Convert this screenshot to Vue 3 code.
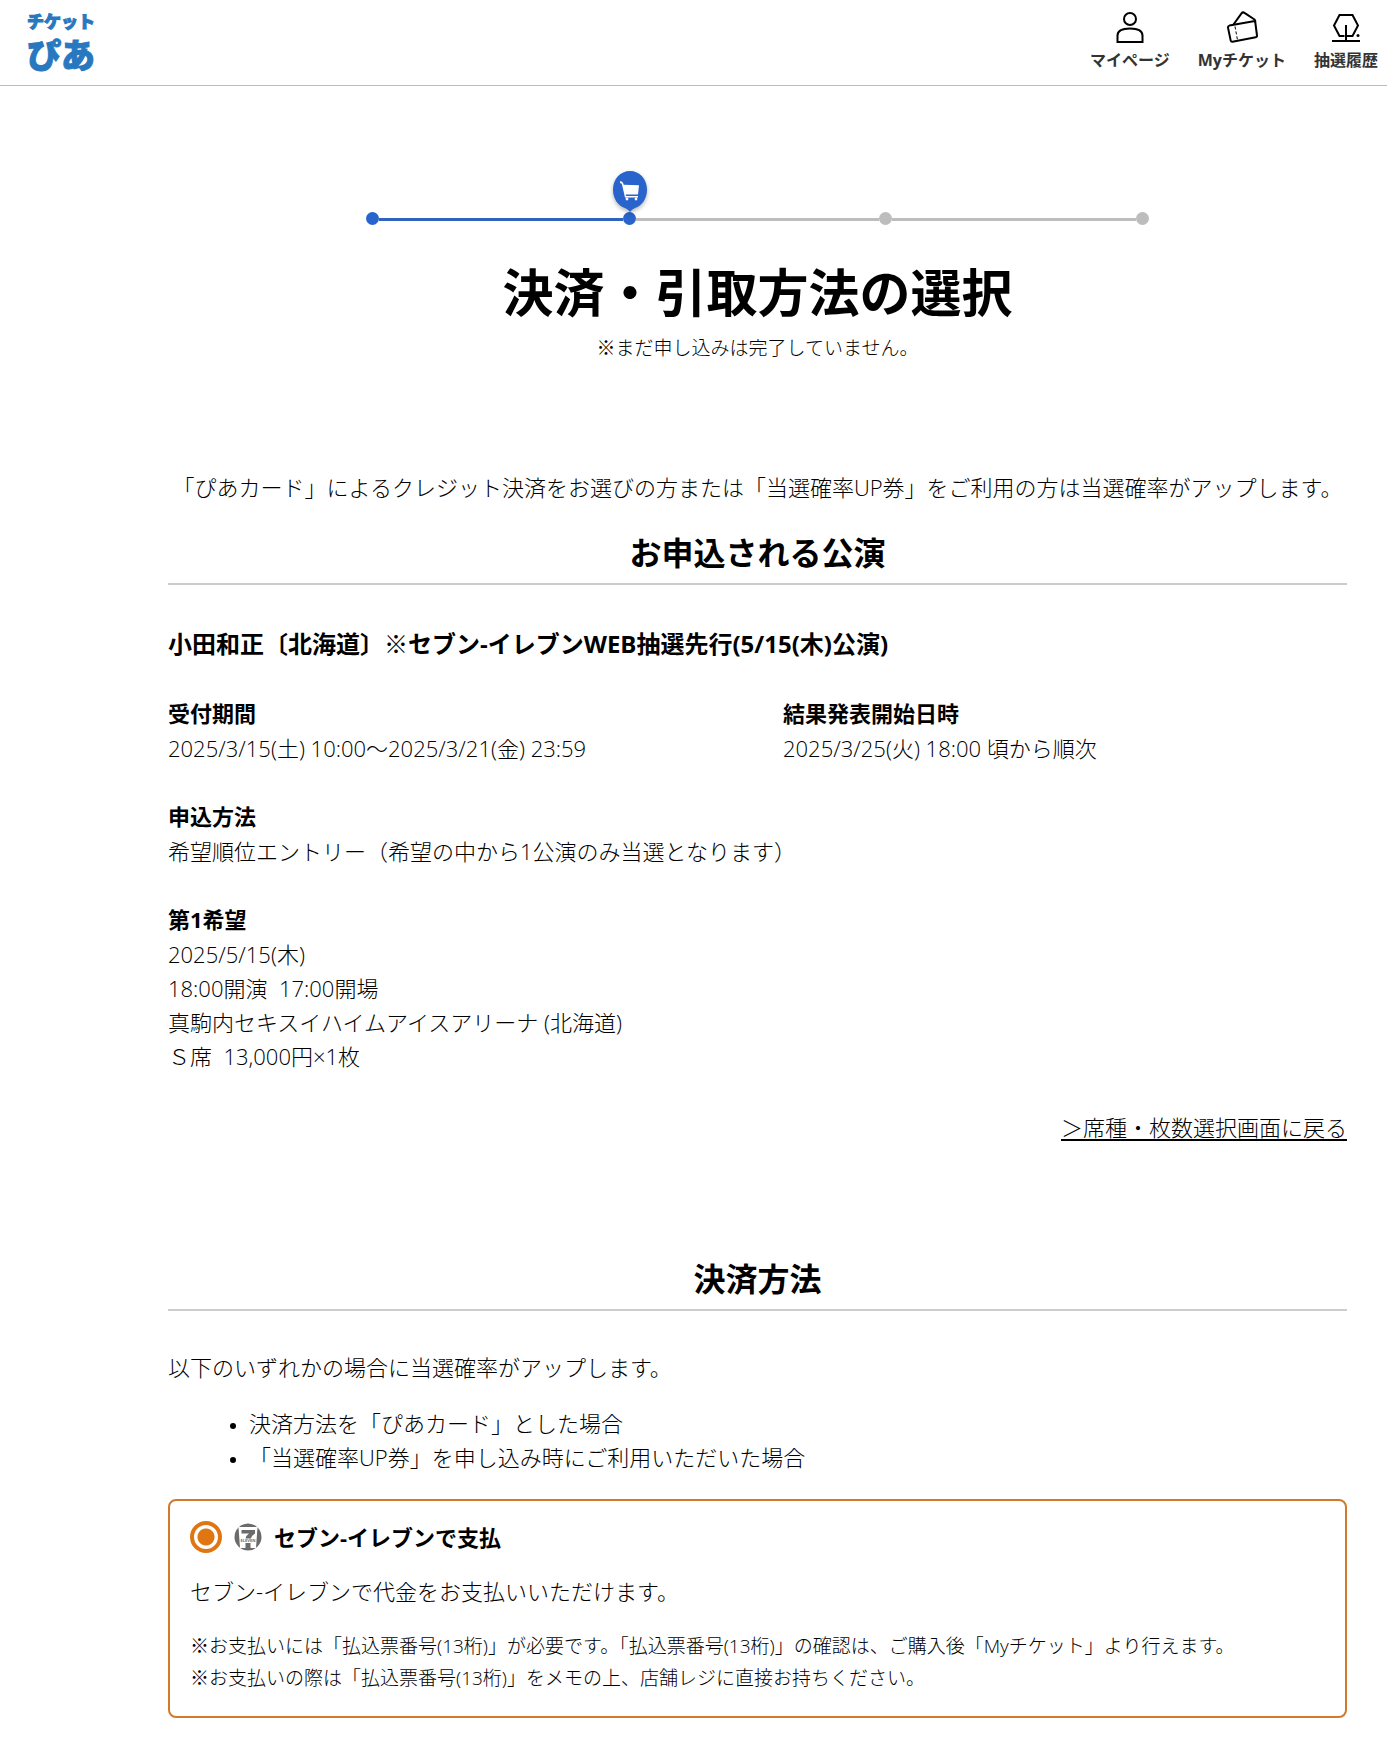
<template>
    <div class="page">
        <header class="header">
            <a class="logo" href="#">
                <span class="logo-top">チケット</span>
                <span class="logo-bottom">ぴあ</span>
            </a>
            <nav class="nav">
                <a class="nav-item" href="#">
                    <svg class="nav-icon" viewBox="0 0 32 34">
                        <circle cx="16" cy="8" r="6" />
                        <path d="M3.500 31V24.500C3.500 19.500 8 17.500 16 17.500S28.500 19.500 28.500 24.500V31Z" />
                    </svg>
                    <span>マイページ</span>
                </a>
                <a class="nav-item" href="#">
                    <svg class="nav-icon" viewBox="0 0 32 34">
                        <path d="M3.400 14.600L27.500 10.300Q29 10.100 29.300 11.500L31 24.500Q31.200 26 29.700 26.300L6.500 30.800Q5 31 4.700 29.600L2 16.600Q1.800 15 3.400 14.600Z" />
                        <path d="M7.500 13.500L15.500 2.400Q16.800 .7 18.500 1.900L28.500 8.500Q29.500 9.300 29.300 11" />
                        <path class="thin" d="M9 15.500L11.500 29" stroke-dasharray="3 2" />
                    </svg>
                    <span>Myチケット</span>
                </a>
                <a class="nav-item" href="#">
                    <svg class="nav-icon" viewBox="0 0 32 34">
                        <path d="M14.500 25H9.500L4 14.500L9.500 4H22.500L28 14.500L22.500 25H16" />
                        <path d="M16 14V30M2 30H30" />
                        <circle class="ball" cx="28" cy="24.500" r="1.500" />
                    </svg>
                    <span>抽選履歴</span>
                </a>
            </nav>
        </header>

        <main class="main">
            <ol class="steps">
                <li v-for="step in 4" :key="step" class="step" :class="{ done: step <= currentStep, passed: step < currentStep }">
                    <svg v-if="step === currentStep" class="pin" viewBox="0 0 34 41" width="34" height="41">
                        <path fill="#2864cc" d="M17 0C26.500 0 34 8 34 18.500C34 28 29 34.500 22 37Q18.500 38.500 17 41Q15.500 38.500 12 37C5 34.500 0 28 0 18.500C0 8 7.500 0 17 0Z" />
                        <path fill="#fff" d="M7 10.200Q10 9.800 10.600 13.800L26 14.200L25 23.500H12.800L13 25H25V26.500H12L9 13.500Q8.700 12 7 12Z" />
                        <circle cx="14" cy="28" r="1.400" fill="#fff" />
                        <circle cx="23" cy="28" r="1.400" fill="#fff" />
                    </svg>
                    <span class="dot"></span>
                </li>
            </ol>

            <h1 class="title">決済・引取方法の選択</h1>
            <p class="title-note">※まだ申し込みは完了していません。</p>

            <p class="intro">「ぴあカード」によるクレジット決済をお選びの方または「当選確率UP券」をご利用の方は当選確率がアップします。</p>

            <section>
                <h2 class="section-title">お申込される公演</h2>
                <h3 class="event-name">小田和正〔北海道〕※セブン-イレブンWEB抽選先行(5/15(木)公演)</h3>
                <dl class="fields">
                    <div v-for="field in fields" :key="field.label" :class="{ wide: field.wide }">
                        <dt>{{ field.label }}</dt>
                        <dd v-for="line in field.lines" :key="line">{{ line }}</dd>
                    </div>
                </dl>
                <p class="back"><a href="#">＞席種・枚数選択画面に戻る</a></p>
            </section>

            <section class="payment">
                <h2 class="section-title">決済方法</h2>
                <p class="lead">以下のいずれかの場合に当選確率がアップします。</p>
                <ul class="conditions">
                    <li>決済方法を「ぴあカード」とした場合</li>
                    <li>「当選確率UP券」を申し込み時にご利用いただいた場合</li>
                </ul>

                <div class="method" :class="{ selected: method === 'seven' }">
                    <label class="method-head" for="seven">
                        <input id="seven" v-model="method" type="radio" name="method" value="seven">
                        <svg class="method-icon" viewBox="0 0 28 28" width="28" height="28" aria-hidden="true">
                            <circle cx="14" cy="14" r="13.500" fill="#6b6b6b" />
                            <path fill="#fff" d="M4.500 4H23.500L22 25H6Z" />
                            <path fill="#6b6b6b" d="M7.500 7H21V10.500Q17.500 12.500 17 15.500H11.500Q12 12.500 15 10.500H7.500ZM11.500 20H16.500V26H11.500Z" />
                            <text x="14" y="19" text-anchor="middle">ELEVEN</text>
                        </svg>
                        <span>セブン-イレブンで支払</span>
                    </label>
                    <p class="method-text">セブン-イレブンで代金をお支払いいただけます。</p>
                    <p class="method-notes">
                        ※お支払いには「払込票番号(13桁)」が必要です。「払込票番号(13桁)」の確認は、ご購入後「Myチケット」より行えます。<br>
                        ※お支払いの際は「払込票番号(13桁)」をメモの上、店舗レジに直接お持ちください。
                    </p>
                </div>
            </section>
        </main>
    </div>
</template>

<script setup>
import { ref } from 'vue'

const currentStep = ref(2)
const method = ref('seven')

const fields = [
    { label: '受付期間', lines: ['2025/3/15(土) 10:00～2025/3/21(金) 23:59'] },
    { label: '結果発表開始日時', lines: ['2025/3/25(火) 18:00 頃から順次'] },
    { label: '申込方法', lines: ['希望順位エントリー（希望の中から1公演のみ当選となります）'], wide: true },
    {
        label: '第1希望',
        lines: [
            '2025/5/15(木)',
            '18:00開演\u00a0 17:00開場',
            '真駒内セキスイハイムアイスアリーナ (北海道)',
            'Ｓ席\u00a0 13,000円×1枚',
        ],
        wide: true,
    },
]
</script>

<style>
body {
    background: #fff;
}
</style>

<style scoped>
.page {
    color: #000;
    font-family: "Open Sans", "Noto Sans CJK JP", sans-serif;
    font-size: 22px;
    font-weight: 300;
    line-height: 34px;
}

h1, h2, h3, p, ol, ul, dl, dd {
    margin: 0;
    padding: 0;
}

/* Header */
.header {
    display: flex;
    justify-content: space-between;
    align-items: flex-start;
    height: 86px;
    padding: 0 9px 0 27px;
    border-bottom: 1px solid #bbb;
    box-sizing: border-box;
}

.logo {
    display: flex;
    flex-direction: column;
    gap: 4px;
    padding-top: 13px;
    color: #2878c0;
    font-family: "Liberation Sans", "Noto Sans CJK JP", sans-serif;
    font-weight: 900;
    text-decoration: none;
    -webkit-text-stroke: 1px #2878c0;
}

.logo-top {
    font-size: 17px;
    line-height: 20px;
}

.logo-bottom {
    font-size: 34px;
    line-height: 38px;
}

.nav {
    display: flex;
    gap: 28px;
    padding-top: 11px;
}

.nav-item {
    display: flex;
    flex-direction: column;
    align-items: center;
    gap: 3px;
    color: #333;
    font-size: 16px;
    font-weight: 700;
    line-height: 24px;
    text-decoration: none;
    white-space: nowrap;
}

.nav-icon {
    width: 32px;
    height: 34px;
    fill: none;
    stroke: #000;
    stroke-width: 2;
}

.nav-icon .thin {
    stroke-width: 1;
}

.nav-icon .ball {
    fill: #000;
    stroke: none;
}

.main {
    margin: 0 40px 0 168px;
    padding: 85px 0 32px;
}

/* Progress */
.steps {
    display: flex;
    justify-content: space-between;
    align-items: flex-end;
    width: 66.4%;
    height: 54px;
    margin: 0 auto;
    list-style: none;
}

.step {
    position: relative;
    display: flex;
    flex: 1;
    align-items: center;
    height: 13px;
}

.step:last-child {
    flex: none;
}

.step::after {
    content: "";
    flex: 1;
    height: 3px;
    margin-top: 2px;
    background: #bdbdbd;
}

.step:last-child::after {
    display: none;
}

.step.passed::after {
    background: #2f63bd;
}

.dot {
    width: 13px;
    height: 13px;
    border-radius: 50%;
    background: #bdbdbd;
}

.done .dot {
    background: #2864cc;
}

.pin {
    position: absolute;
    bottom: 13px;
    left: -10px;
    filter: drop-shadow(0 2px 2px rgba(0, 0, 0, 0.3));
}

.title {
    margin-top: 35px;
    font-size: 51px;
    font-weight: 700;
    line-height: 64px;
    text-align: center;
}

.title-note {
    margin-top: 8px;
    font-size: 19px;
    line-height: 32px;
    text-align: center;
}

.intro {
    margin-top: 106px;
    text-align: center;
}

.section-title {
    margin-top: 27px;
    padding-bottom: 8px;
    border-bottom: 2px solid #ccc;
    font-size: 32px;
    font-weight: 700;
    line-height: 44px;
    text-align: center;
}

.event-name {
    margin-top: 42px;
    font-size: 24px;
    font-weight: 700;
}

.fields {
    display: grid;
    grid-template-columns: 1fr 1fr;
    gap: 34px 51px;
    margin-top: 35px;
}

.fields .wide {
    grid-column: 1 / -1;
}

.fields dt {
    margin-bottom: 1px;
    font-weight: 700;
}

.back {
    margin-top: 37px;
    text-align: right;
}

.back a {
    color: #000;
    text-decoration-thickness: 2px;
    text-underline-offset: 3px;
}

.payment .section-title {
    margin-top: 113px;
}

.lead {
    margin-top: 39px;
}

.conditions {
    margin-top: 22px;
    padding-left: 81px;
}

.conditions li::marker {
    font-size: 18px;
}

/* Payment method */
.method {
    margin-top: 25px;
    padding: 19px 20px 22px;
    border: 2px solid #ccc;
    border-radius: 8px;
}

.method.selected {
    border-color: #d27a2c;
}

.method-head {
    display: flex;
    align-items: center;
    gap: 12px;
    font-weight: 700;
}

.method-head input {
    appearance: none;
    width: 32px;
    height: 32px;
    margin: 0;
    border: 4px solid #e07612;
    border-radius: 50%;
}

.method-head input:checked {
    background: radial-gradient(circle, #e07612 8px, #fff 9px);
}

.method-icon text {
    fill: #6b6b6b;
    font-size: 4px;
    font-weight: 700;
}

.method-text {
    margin-top: 20px;
}

.method-notes {
    margin-top: 22px;
    font-size: 19px;
    line-height: 32px;
}
</style>
